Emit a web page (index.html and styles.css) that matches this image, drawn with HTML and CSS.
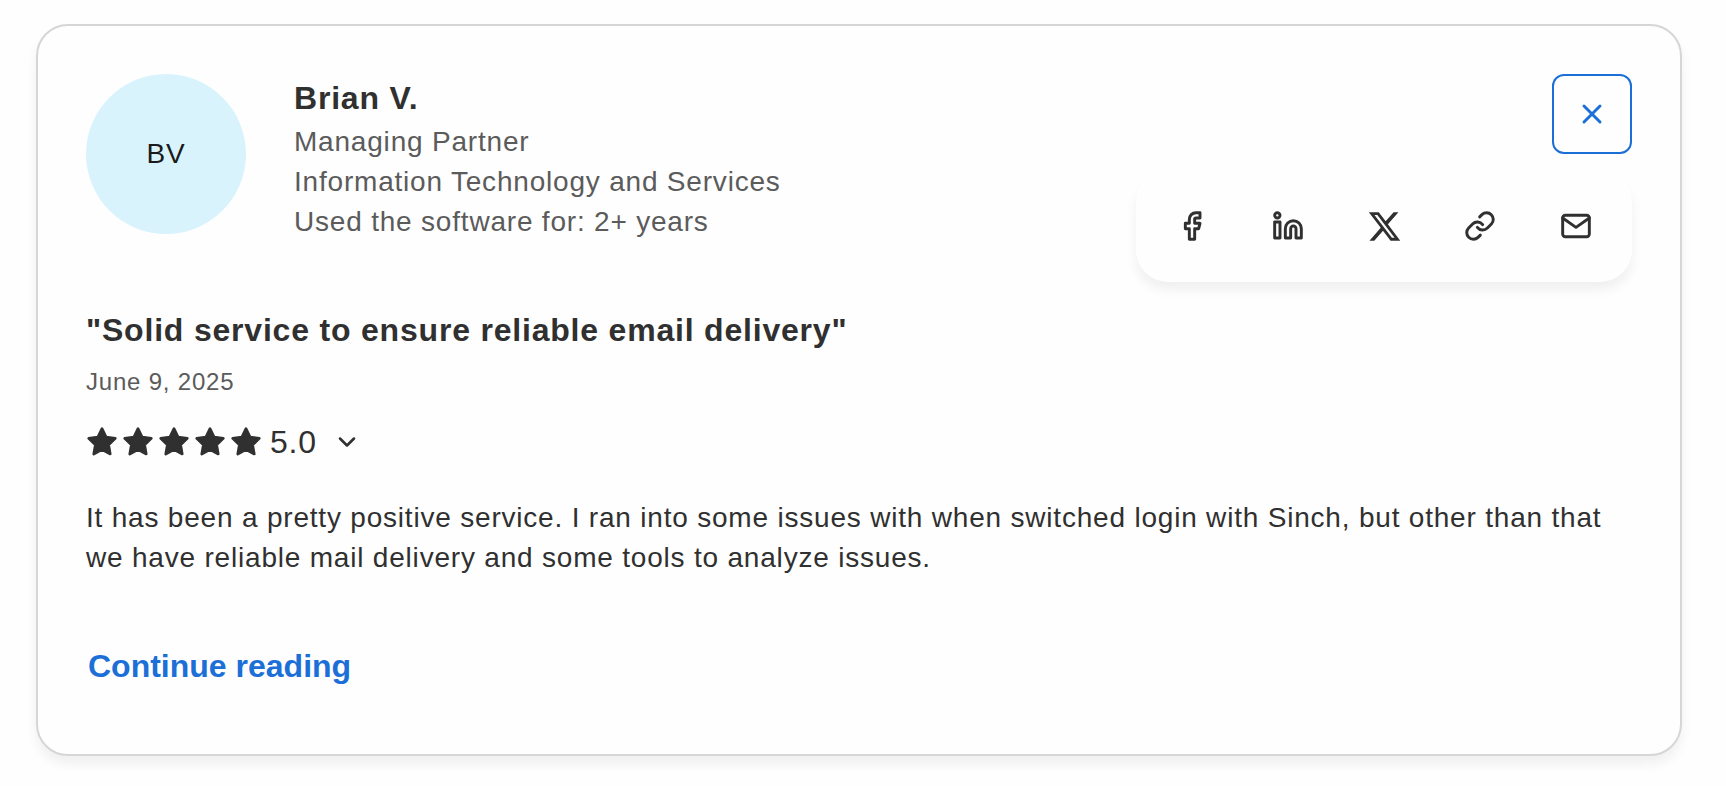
FILE: index.html
```html
<!DOCTYPE html>
<html lang="en">
<head>
    <meta charset="UTF-8">
    <meta name="viewport" content="width=device-width, initial-scale=1.0">
    <title>Review</title>
    <link rel="stylesheet" href="styles.css">
</head>
<body>

    <article class="review">

        <header class="review-header">
            <div class="avatar">BV</div>

            <div class="author">
                <h2 class="author-name">Brian V.</h2>
                <p>Managing Partner</p>
                <p>Information Technology and Services</p>
                <p>Used the software for: 2+ years</p>
            </div>

            <div class="actions">
                <button class="btn-close" aria-label="Close">
                    <svg class="icon" viewBox="0 0 24 24"><path d="M18 6 6 18M6 6l12 12"/></svg>
                </button>

                <div class="share">
                    <a class="share-link" aria-label="Facebook">
                        <svg class="icon" viewBox="0 0 24 24"><path d="M18 2h-3a5 5 0 0 0-5 5v3H7v4h3v8h4v-8h3l1-4h-4V7a1 1 0 0 1 1-1h3z"/></svg>
                    </a>
                    <a class="share-link" aria-label="LinkedIn">
                        <svg class="icon" viewBox="0 0 24 24">
                            <path d="M16 8a6 6 0 0 1 6 6v7h-4v-7a2 2 0 0 0-4 0v7h-4v-7a6 6 0 0 1 6-6z"/>
                            <rect x="2" y="9" width="4" height="12"/>
                            <circle cx="4" cy="4" r="2"/>
                        </svg>
                    </a>
                    <a class="share-link" aria-label="X">
                        <svg class="icon-x" viewBox="0 0 24 24"><path d="M18.244 2.25h3.308l-7.227 8.26 8.502 11.24H16.17l-5.214-6.817L4.99 21.75H1.68l7.73-8.835L1.254 2.25H8.08l4.713 6.231zm-1.161 17.52h1.833L7.084 4.126H5.117z"/></svg>
                    </a>
                    <a class="share-link" aria-label="Copy link">
                        <svg class="icon" viewBox="0 0 24 24">
                            <path d="M10 13a5 5 0 0 0 7.54.54l3-3a5 5 0 0 0-7.07-7.07l-1.72 1.71"/>
                            <path d="M14 11a5 5 0 0 0-7.54-.54l-3 3a5 5 0 0 0 7.07 7.07l1.71-1.71"/>
                        </svg>
                    </a>
                    <a class="share-link" aria-label="Email">
                        <svg class="icon" viewBox="0 0 24 24">
                            <rect x="2" y="4" width="20" height="16" rx="2"/>
                            <path d="m22 6-10 7L2 6"/>
                        </svg>
                    </a>
                </div>
            </div>
        </header>

        <h3 class="review-title">"Solid service to ensure reliable email delivery"</h3>
        <p class="review-date">June 9, 2025</p>

        <div class="rating">
            <svg class="star"><use href="#star"/></svg>
            <svg class="star"><use href="#star"/></svg>
            <svg class="star"><use href="#star"/></svg>
            <svg class="star"><use href="#star"/></svg>
            <svg class="star"><use href="#star"/></svg>
            <span class="score">5.0</span>
            <svg class="icon chevron" viewBox="0 0 24 24"><path d="m6 9 6 6 6-6"/></svg>
        </div>

        <p class="review-text">It has been a pretty positive service. I ran into some issues with when switched login with Sinch, but other than that we have reliable mail delivery and some tools to analyze issues.</p>

        <a class="continue">Continue reading</a>

    </article>

    <svg class="sprite">
        <symbol id="star" viewBox="0 0 24 24">
            <path d="M12 2l3.09 6.26L22 9.27l-5 4.87 1.18 6.88L12 17.77l-6.18 3.25L7 14.14 2 9.27l6.91-1.01z"/>
        </symbol>
    </svg>

</body>
</html>
```

FILE: styles.css
```css
*{
    box-sizing: border-box;
}

body{
    margin: 0;
    padding: 24px 44px 30px 36px;
    background-color: #fefefe;
    color: #303030;
    font-family: "Liberation Sans", Arial, sans-serif;
    font-size: 28px;
    line-height: 40px;
    letter-spacing: 0.8px;
}

h2, h3, p{
    margin: 0;
}

.review{
    height: 732px;
    padding: 48px;
    background-color: #fefefe;
    border: 2px solid #d6d6d6;
    border-radius: 32px;
    box-shadow: 0 8px 12px rgba(0, 0, 0, 0.06);
}

.review-header{
    display: flex;
    align-items: flex-start;
}

.avatar{
    display: flex;
    align-items: center;
    justify-content: center;
    width: 160px;
    height: 160px;
    margin-right: 48px;
    border-radius: 50%;
    background-color: #d9f3fd;
    color: #1a1a1a;
}

.author{
    color: #5b5b5b;
}

.author-name{
    color: #303030;
    font-size: 32px;
    line-height: 48px;
}

.actions{
    display: flex;
    flex-direction: column;
    align-items: flex-end;
    gap: 16px;
    margin-left: auto;
}

.btn-close{
    display: flex;
    align-items: center;
    justify-content: center;
    width: 80px;
    height: 80px;
    padding: 0;
    border: 2px solid #1b6fd6;
    border-radius: 12px;
    background: none;
    color: #1b6fd6;
}

.share{
    display: flex;
    align-items: center;
    height: 112px;
    padding: 0 8px;
    border-radius: 32px;
    background-color: #fefefe;
    box-shadow: 0 8px 12px rgba(0, 0, 0, 0.06);
}

.share-link{
    display: flex;
    align-items: center;
    justify-content: center;
    width: 96px;
}

.icon{
    width: 32px;
    height: 32px;
    fill: none;
    stroke: currentColor;
    stroke-width: 2.2;
    stroke-linecap: round;
    stroke-linejoin: round;
}

.icon-x{
    width: 35px;
    height: 35px;
    fill: currentColor;
}

.review-title{
    margin-top: 24px;
    font-size: 32px;
    line-height: 48px;
}

.review-date{
    margin-top: 12px;
    color: #5b5b5b;
    font-size: 24px;
    line-height: 32px;
}

.rating{
    display: flex;
    align-items: center;
    gap: 4px;
    height: 48px;
    margin-top: 20px;
}

.star{
    width: 32px;
    height: 32px;
    fill: currentColor;
    stroke: currentColor;
    stroke-width: 2;
    stroke-linejoin: round;
}

.score{
    margin-left: 4px;
    font-size: 32px;
}

.chevron{
    width: 28px;
    height: 28px;
    margin-left: 12px;
}

.review-text{
    margin-top: 32px;
}

.continue{
    display: inline-block;
    margin-top: 64px;
    padding-left: 2px;
    color: #1b6fd6;
    font-size: 32px;
    font-weight: bold;
    line-height: 48px;
    letter-spacing: 0;
}

.sprite{
    position: absolute;
    width: 0;
    height: 0;
}
```
